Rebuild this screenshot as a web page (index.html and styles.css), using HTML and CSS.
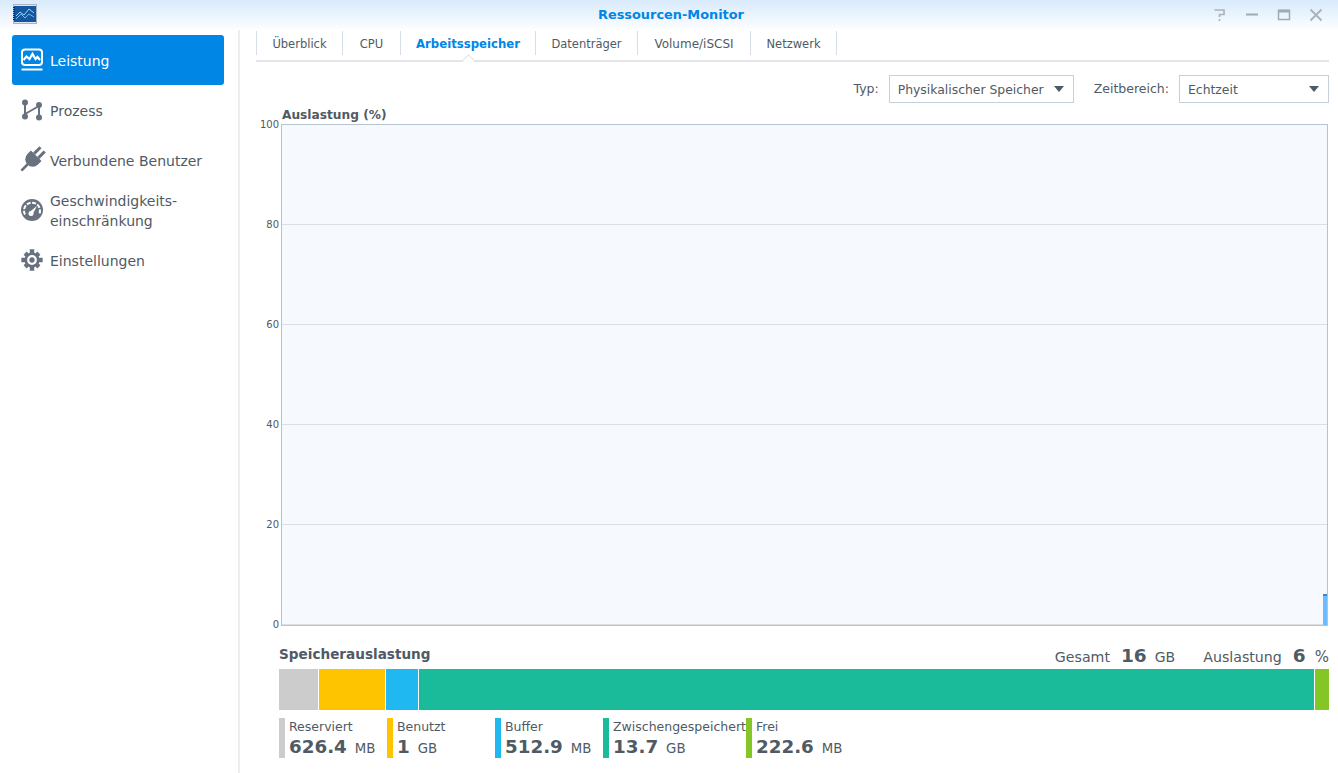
FILE: index.html
```html
<!DOCTYPE html>
<html lang="de">
<head>
<meta charset="utf-8">
<title>Ressourcen-Monitor</title>
<link rel="stylesheet" href="styles.css">
</head>
<body>
<div class="window">
  <header class="titlebar">
    <svg class="app-icon" width="24" height="20" viewBox="0 0 24 20"><rect x=".5" y=".5" width="23" height="19" fill="#dfe5ec" stroke="#aab4c0"/><rect x="1" y="2" width="22" height="16" fill="#14569f"/><path d="M1 3v14" stroke="#0a2f5c" stroke-width="2" stroke-dasharray="1 1"/><path d="M3 12l4-4 4 3 5-6 5 4" fill="none" stroke="#9ad8f8"/><path d="M3 15l5-5 4 4 4-4 5 3" fill="none" stroke="#6cbcec"/></svg>
    <h1 class="title">Ressourcen-Monitor</h1>
    <div class="controls">
      <svg width="14" height="14" viewBox="0 0 14 14"><path d="M1.500 2h9.500v4.500H6.500V9M6.500 11v2" fill="none" stroke="#a9b2bb" stroke-width="1.600"/></svg>
      <svg width="14" height="14" viewBox="0 0 14 14"><path d="M1 6.500h12" stroke="#a0aab4" stroke-width="2"/></svg>
      <svg width="14" height="14" viewBox="0 0 14 14"><path d="M1.500 2.500h11v9h-11z" fill="none" stroke="#a0aab4" stroke-width="1.500"/><path d="M1 3h12" stroke="#a0aab4" stroke-width="3"/></svg>
      <svg width="14" height="14" viewBox="0 0 14 14"><path d="M1.500 1.500l11 11M12.500 1.500l-11 11" stroke="#a9b2bb" stroke-width="1.800"/></svg>
    </div>
  </header>
  <div class="body">
    <nav class="sidebar">
      <a class="nav-item active">
        <svg class="nav-icon" viewBox="0 0 24 24"><rect x="2" y="1.500" width="20" height="15.500" rx="3" fill="none" stroke="#fff" stroke-width="2"/><path d="M3.500 12l3-3.500 3 2.500 3-5 3 5 2-2 2.500 3" fill="none" stroke="#fff" stroke-width="2.200"/><path d="M1.500 21.500h21" stroke="#fff" stroke-width="2"/></svg>
        <span>Leistung</span>
      </a>
      <a class="nav-item">
        <svg class="nav-icon" viewBox="0 0 24 24"><path d="M5 5v14M5 16L19 8M19 8v12" fill="none" stroke="#68727f" stroke-width="2"/><circle cx="5" cy="4.500" r="3" fill="#68727f"/><circle cx="5" cy="18.500" r="3" fill="#68727f"/><circle cx="19" cy="7" r="3" fill="#68727f"/><circle cx="19" cy="19.500" r="3" fill="#68727f"/></svg>
        <span>Prozess</span>
      </a>
      <a class="nav-item">
        <svg class="nav-icon" viewBox="0 0 24 24"><g transform="rotate(45 12 12)" fill="#68727f"><rect x="7.500" y="-3" width="3" height="9"/><rect x="13.500" y="-3" width="3" height="9"/><path d="M4.500 6h15v5a7.500 7.500 0 0 1-15 0z"/><rect x="10.700" y="17" width="2.600" height="10"/></g></svg>
        <span>Verbundene Benutzer</span>
      </a>
      <a class="nav-item two-line">
        <svg class="nav-icon" viewBox="0 0 24 24"><circle cx="12" cy="12" r="11" fill="#68727f"/><path d="M5 16.500A8 8 0 1 1 19 16.500" fill="none" stroke="#fff" stroke-width="2" stroke-dasharray="4 1.500"/><path d="M9.500 14L17 8l-4.500 8.500z" fill="#fff"/><circle cx="11" cy="15.500" r="2.500" fill="#fff"/></svg>
        <span>Geschwindigkeits-<br>einschränkung</span>
      </a>
      <a class="nav-item">
        <svg class="nav-icon" viewBox="-1.500 -1.500 27 27"><circle cx="12" cy="12" r="8.500" fill="#68727f"/><path d="M9.500 0h5v4.500h-5zM9.500 19.500h5V24h-5zM0 9.500h4.500v5H0zM19.500 9.500H24v5h-4.500zM2.500 6L6 2.500l3 3L5.500 9zM18 2.500L21.500 6l-3 3L15 5.500zM2.500 18L6 21.500l3-3L5.500 15zM21.500 18L18 21.500l-3-3 3.500-3.500z" fill="#68727f"/><circle cx="12" cy="12" r="5.500" fill="#fff"/><circle cx="12" cy="12" r="3" fill="#68727f"/></svg>
        <span>Einstellungen</span>
      </a>
    </nav>
    <main class="content">
      <div class="tabs">
        <a class="tab tab-overview">Überblick</a>
        <a class="tab tab-cpu">CPU</a>
        <a class="tab tab-ram current">Arbeitsspeicher</a>
        <a class="tab tab-disk">Datenträger</a>
        <a class="tab tab-volume">Volume/iSCSI</a>
        <a class="tab tab-net">Netzwerk</a>
      </div>
      <div class="toolbar">
        <label class="field-label">Typ:</label>
        <div class="select select-type"><span>Physikalischer Speicher</span><i class="arrow"></i></div>
        <label class="field-label range-label">Zeitbereich:</label>
        <div class="select select-range"><span>Echtzeit</span><i class="arrow"></i></div>
      </div>
      <h2 class="chart-title">Auslastung (%)</h2>
      <div class="chart">
        <div class="y-axis">
          <span>100</span><span>80</span><span>60</span><span>40</span><span>20</span><span>0</span>
        </div>
        <div class="plot">
          <div class="grid-row"></div><div class="grid-row"></div><div class="grid-row"></div><div class="grid-row"></div><div class="grid-row"></div>
          <div class="spike"></div>
        </div>
      </div>
      <section class="usage">
        <div class="usage-head">
          <h2 class="usage-title">Speicherauslastung</h2>
          <div class="totals">
            <span class="total-label">Gesamt</span><b class="total-num">16</b><span class="unit">GB</span>
            <span class="total-label second">Auslastung</span><b class="total-num last">6</b><span class="unit percent">%</span>
          </div>
        </div>
        <div class="bar">
          <div class="seg grey seg-reserved"></div>
          <div class="seg yellow seg-used"></div>
          <div class="seg blue seg-buffer"></div>
          <div class="seg green seg-cached"></div>
          <div class="seg lime seg-free"></div>
        </div>
        <div class="legend">
          <div class="item w108 b-grey"><span class="name">Reserviert</span><span class="val"><b>626.4</b><em>MB</em></span></div>
          <div class="item w108 b-yellow"><span class="name">Benutzt</span><span class="val"><b>1</b><em>GB</em></span></div>
          <div class="item w108 b-blue"><span class="name">Buffer</span><span class="val"><b>512.9</b><em>MB</em></span></div>
          <div class="item w143 b-green"><span class="name">Zwischengespeichert</span><span class="val"><b>13.7</b><em>GB</em></span></div>
          <div class="item b-lime"><span class="name">Frei</span><span class="val"><b>222.6</b><em>MB</em></span></div>
        </div>
      </section>
    </main>
  </div>
</div>
</body>
</html>
```
FILE: styles.css
```css
* { box-sizing: border-box; }
html, body { margin: 0; height: 100%; background: #fff; overflow: hidden; }
body { font-family: "DejaVu Sans", Verdana, sans-serif; color: #505a64; }
.window { width: 1338px; height: 773px; display: flex; flex-direction: column; }

.titlebar { height: 30px; flex: none; display: flex; align-items: center; position: relative; padding: 0 12px 0 13px; background: linear-gradient(#d8eafb, #fdfeff); }
.app-icon { display: block; margin-top: -3px; }
.title { position: absolute; left: 0; right: 0; top: 7px; margin: 0; text-align: center; font-size: 12.900px; line-height: 15px; font-weight: 700; color: #0086e5; padding-left: 4px; }
.controls { margin-left: auto; display: flex; gap: 18px; padding-right: 3px; margin-top: -1px; }
.controls svg { display: block; }

.body { flex: 1; display: flex; min-height: 0; }
.sidebar { width: 240px; flex: none; padding: 5px 14px 0 12px; border-right: 2px solid #eceef0; }
.nav-item { height: 50px; display: flex; align-items: center; gap: 6px; padding-left: 8px; font-size: 14px; line-height: 20px; color: #505a64; }
.nav-item span { margin-top: 2px; }
.nav-item.active { background: #0086e5; color: #fff; border-radius: 3px; }
.nav-icon { width: 24px; height: 24px; flex: none; overflow: visible; }

.content { flex: 1; padding: 0 9px 0 16px; min-width: 0; }
.tabs { height: 32px; display: flex; position: relative; border-bottom: 2px solid #e3e5e8; }
.tabs::before { content: ""; width: 1px; height: 24px; margin-top: 1px; background: #d6dfe7; }
.tab { height: 24px; margin-top: 1px; font-size: 11.500px; line-height: 26px; text-align: center; color: #505a64; border-right: 1px solid #d6dfe7; position: relative; }
.tab-overview { width: 86px; }
.tab-cpu { width: 58px; }
.tab-ram { width: 135px; }
.tab-disk { width: 102px; }
.tab-volume { width: 113px; font-size: 12px; }
.tab-net { width: 86px; }
.tab.current { font-weight: 700; font-size: 11.700px; color: #0086e5; }
.tab.current::after { content: ""; position: absolute; left: 50%; top: 25px; width: 8px; height: 8px; margin-left: -4px; background: #fff; border-left: 1px solid #dfe2e5; border-top: 1px solid #dfe2e5; transform: rotate(45deg); }

.toolbar { height: 28px; margin-top: 13px; display: flex; align-items: center; justify-content: flex-end; font-size: 12.500px; }
.field-label { margin-right: 10px; margin-top: -2px; }
.range-label { margin-left: 20px; }
.select { height: 28px; display: flex; align-items: center; justify-content: space-between; border: 1px solid #c4d0db; padding: 0 9px 0 8px; font-size: 12.400px; color: #505a64; }
.select-type { width: 185px; }
.select-range { width: 150px; }
.arrow { width: 0; height: 0; border: 5px solid transparent; border-top: 6px solid #505a64; border-bottom: 0; }

.chart-title { margin: 4px 0 0 26px; height: 17px; font-size: 12.200px; line-height: 17px; font-weight: 700; color: #505a64; }
.chart { display: flex; height: 502px; }
.y-axis { width: 25px; margin-top: -6px; margin-bottom: -6px; display: flex; flex-direction: column; justify-content: space-between; text-align: right; font-size: 10px; line-height: 14px; color: #505a64; padding-right: 2px; flex: none; }
.plot { flex: 1; margin-right: 1px; border: 1px solid #b6c3d1; background: #f6fafe; position: relative; display: flex; flex-direction: column; }
.grid-row { height: 100px; flex: none; border-bottom: 1px solid #dcdfe2; }
.spike { position: absolute; right: 0; bottom: 0; width: 4px; height: 31px; background: #6cbcff; border-top: 2px solid #3f87c9; }

.usage { margin-top: 17px; padding-left: 23px; }
.usage-head { height: 26px; display: flex; justify-content: space-between; align-items: flex-start; }
.usage-title { margin: 0; font-size: 13.600px; line-height: 22px; font-weight: 700; color: #505a64; }
.totals { display: flex; align-items: baseline; font-size: 14.200px; line-height: 26px; }
.total-num { font-size: 18.500px; font-weight: 700; margin: 0 8px 0 11px; }
.total-num.last { margin-right: 9px; }
.total-label.second { margin-left: 28px; }
.unit { font-size: 14px; }
.unit.percent { font-size: 15px; }

.bar { height: 41px; display: flex; gap: 1px; }
.seg-reserved { width: 39px; background: #cccccc; }
.seg-used { width: 66px; background: #ffc400; }
.seg-buffer { width: 32px; background: #20b8f0; }
.seg-cached { flex: 1; background: #19bb9a; }
.seg-free { width: 14px; background: #84c628; }

.legend { margin-top: 8px; display: flex; }
.item { height: 40px; padding-left: 4px; border-left: 6px solid #ccc; display: flex; flex-direction: column; white-space: nowrap; }
.w108 { width: 108px; }
.w143 { width: 143px; }
.b-grey { border-color: #cccccc; }
.b-yellow { border-color: #ffc400; }
.b-blue { border-color: #20b8f0; }
.b-green { border-color: #19bb9a; }
.b-lime { border-color: #84c628; }
.name { font-size: 12.500px; line-height: 18px; }
.val { line-height: 22px; display: flex; align-items: baseline; }
.val b { font-size: 18.300px; font-weight: 700; }
.val em { font-style: normal; font-size: 13.300px; margin-left: 8px; }
```
